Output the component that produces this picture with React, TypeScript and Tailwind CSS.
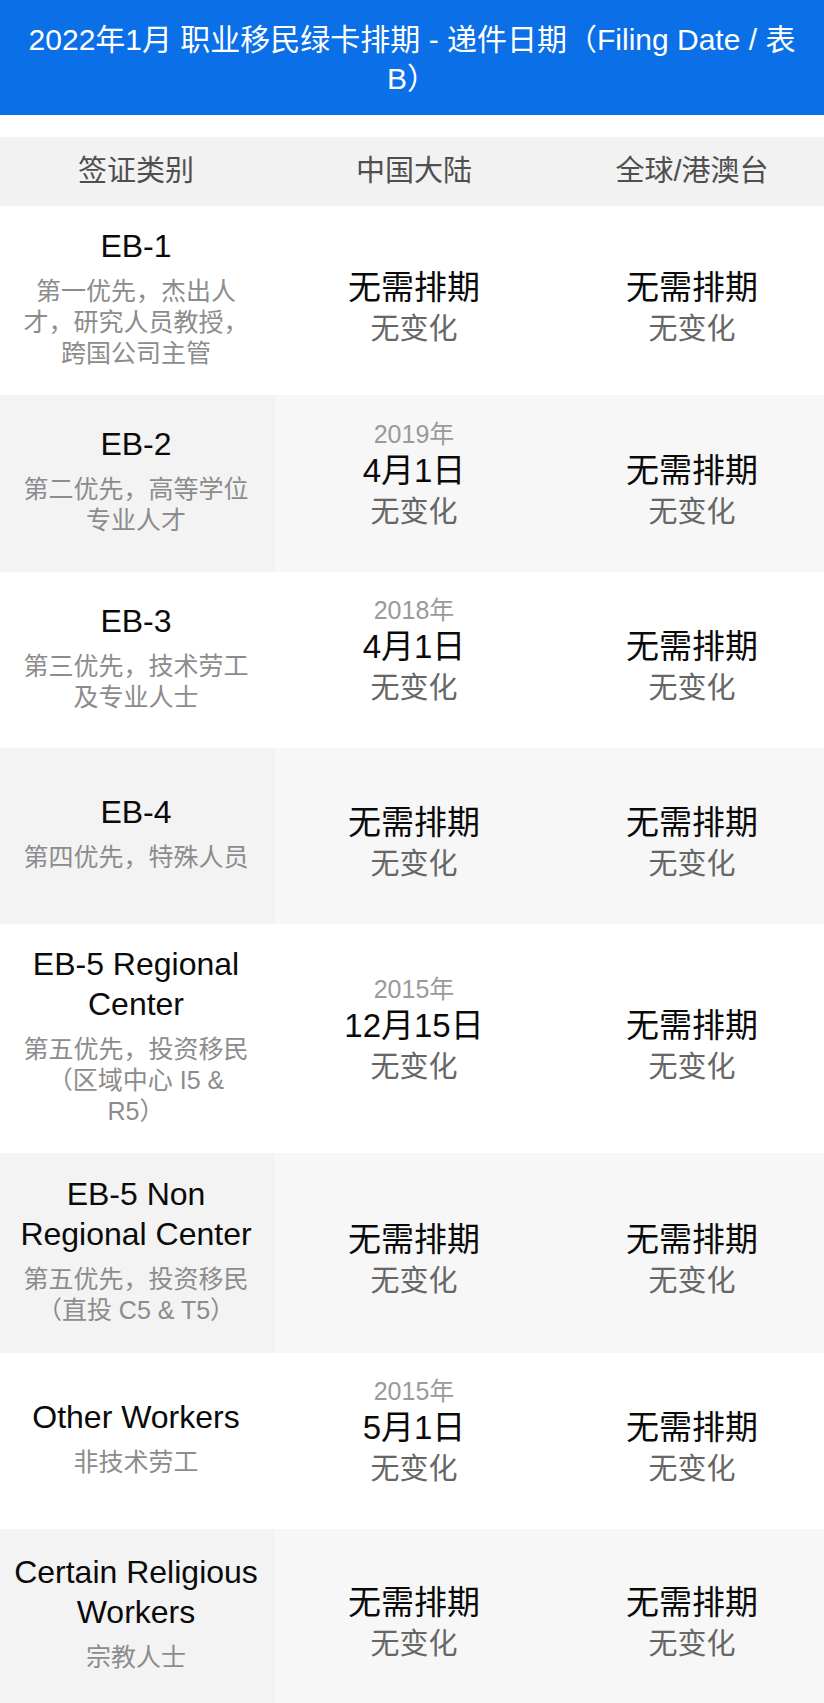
import React from "react";

type Cell = { year?: string; date?: string };

type Row = {
  h: string;
  gray: boolean;
  name: string[];
  sub: string[];
  cn: Cell;
  gl: Cell;
};

const ROWS: Row[] = [
  {
    h: "h-[189px]",
    gray: false,
    name: ["EB-1"],
    sub: ["第一优先，杰出人", "才，研究人员教授，", "跨国公司主管"],
    cn: {},
    gl: {},
  },
  {
    h: "h-[177px]",
    gray: true,
    name: ["EB-2"],
    sub: ["第二优先，高等学位", "专业人才"],
    cn: { year: "2019年", date: "4月1日" },
    gl: {},
  },
  {
    h: "h-[176px]",
    gray: false,
    name: ["EB-3"],
    sub: ["第三优先，技术劳工", "及专业人士"],
    cn: { year: "2018年", date: "4月1日" },
    gl: {},
  },
  {
    h: "h-[176px]",
    gray: true,
    name: ["EB-4"],
    sub: ["第四优先，特殊人员"],
    cn: {},
    gl: {},
  },
  {
    h: "h-[229px]",
    gray: false,
    name: ["EB-5 Regional", "Center"],
    sub: ["第五优先，投资移民", "（区域中心 I5 &", "R5）"],
    cn: { year: "2015年", date: "12月15日" },
    gl: {},
  },
  {
    h: "h-[200px]",
    gray: true,
    name: ["EB-5 Non", "Regional Center"],
    sub: ["第五优先，投资移民", "（直投 C5 & T5）"],
    cn: {},
    gl: {},
  },
  {
    h: "h-[176px]",
    gray: false,
    name: ["Other Workers"],
    sub: ["非技术劳工"],
    cn: { year: "2015年", date: "5月1日" },
    gl: {},
  },
  {
    h: "h-[174px]",
    gray: true,
    name: ["Certain Religious", "Workers"],
    sub: ["宗教人士"],
    cn: {},
    gl: {},
  },
];

const DateCell = ({ cell, className }: { cell: Cell; className: string }) => (
  <div
    className={`flex flex-col items-center justify-center text-center pt-[14px] ${className}`}
  >
    {cell.year && (
      <div className="mt-[-32px] text-[25px] leading-[32px] text-[#9a9a9a]">
        {cell.year}
      </div>
    )}
    <div className="text-[33px] leading-[42px] text-[#0a0a0a]">
      {cell.date ?? "无需排期"}
    </div>
    <div className="text-[29px] leading-[40px] text-[#666]">无变化</div>
  </div>
);

export default function App() {
  return (
    <div className="w-[824px] min-h-[1703px] bg-white font-['Liberation_Sans','Noto_Sans_CJK_SC',sans-serif]">
      {/* Title banner */}
      <div className="h-[115px] bg-[#0b6fe8] pt-[20px] px-2 text-center text-[30px] leading-[39px] text-white">
        2022年1月 职业移民绿卡排期 - 递件日期（Filing Date / 表
        <br />
        B）
      </div>

      <div className="mt-[22px]">
        {/* Table header */}
        <div className="grid h-[69px] grid-cols-[275px_278px_271px] items-center bg-[#f2f2f3] text-center text-[29px] text-[#4f4f4f]">
          <div className="pr-[3px]">签证类别</div>
          <div>中国大陆</div>
          <div className="pl-[7px]">全球/港澳台</div>
        </div>

        {/* Rows */}
        {ROWS.map((row, i) => (
          <div
            key={i}
            className={`grid grid-cols-[275px_278px_271px] ${row.h} ${
              row.gray ? "bg-[#f7f7f7]" : "bg-white"
            }`}
          >
            <div
              className={`flex flex-col items-center justify-center text-center pr-[3px] pb-[7px] ${
                row.gray ? "bg-[#f3f3f3]" : ""
              }`}
            >
              {row.name.map((n) => (
                <div key={n} className="text-[32px] leading-[40px] text-[#0a0a0a]">
                  {n}
                </div>
              ))}
              <div className="mt-[10px] text-[25px] leading-[31px] text-[#8c8c8c]">
                {row.sub.map((s) => (
                  <div key={s}>{s}</div>
                ))}
              </div>
            </div>
            <DateCell cell={row.cn} className="" />
            <DateCell cell={row.gl} className="pl-[7px]" />
          </div>
        ))}
      </div>
    </div>
  );
}
